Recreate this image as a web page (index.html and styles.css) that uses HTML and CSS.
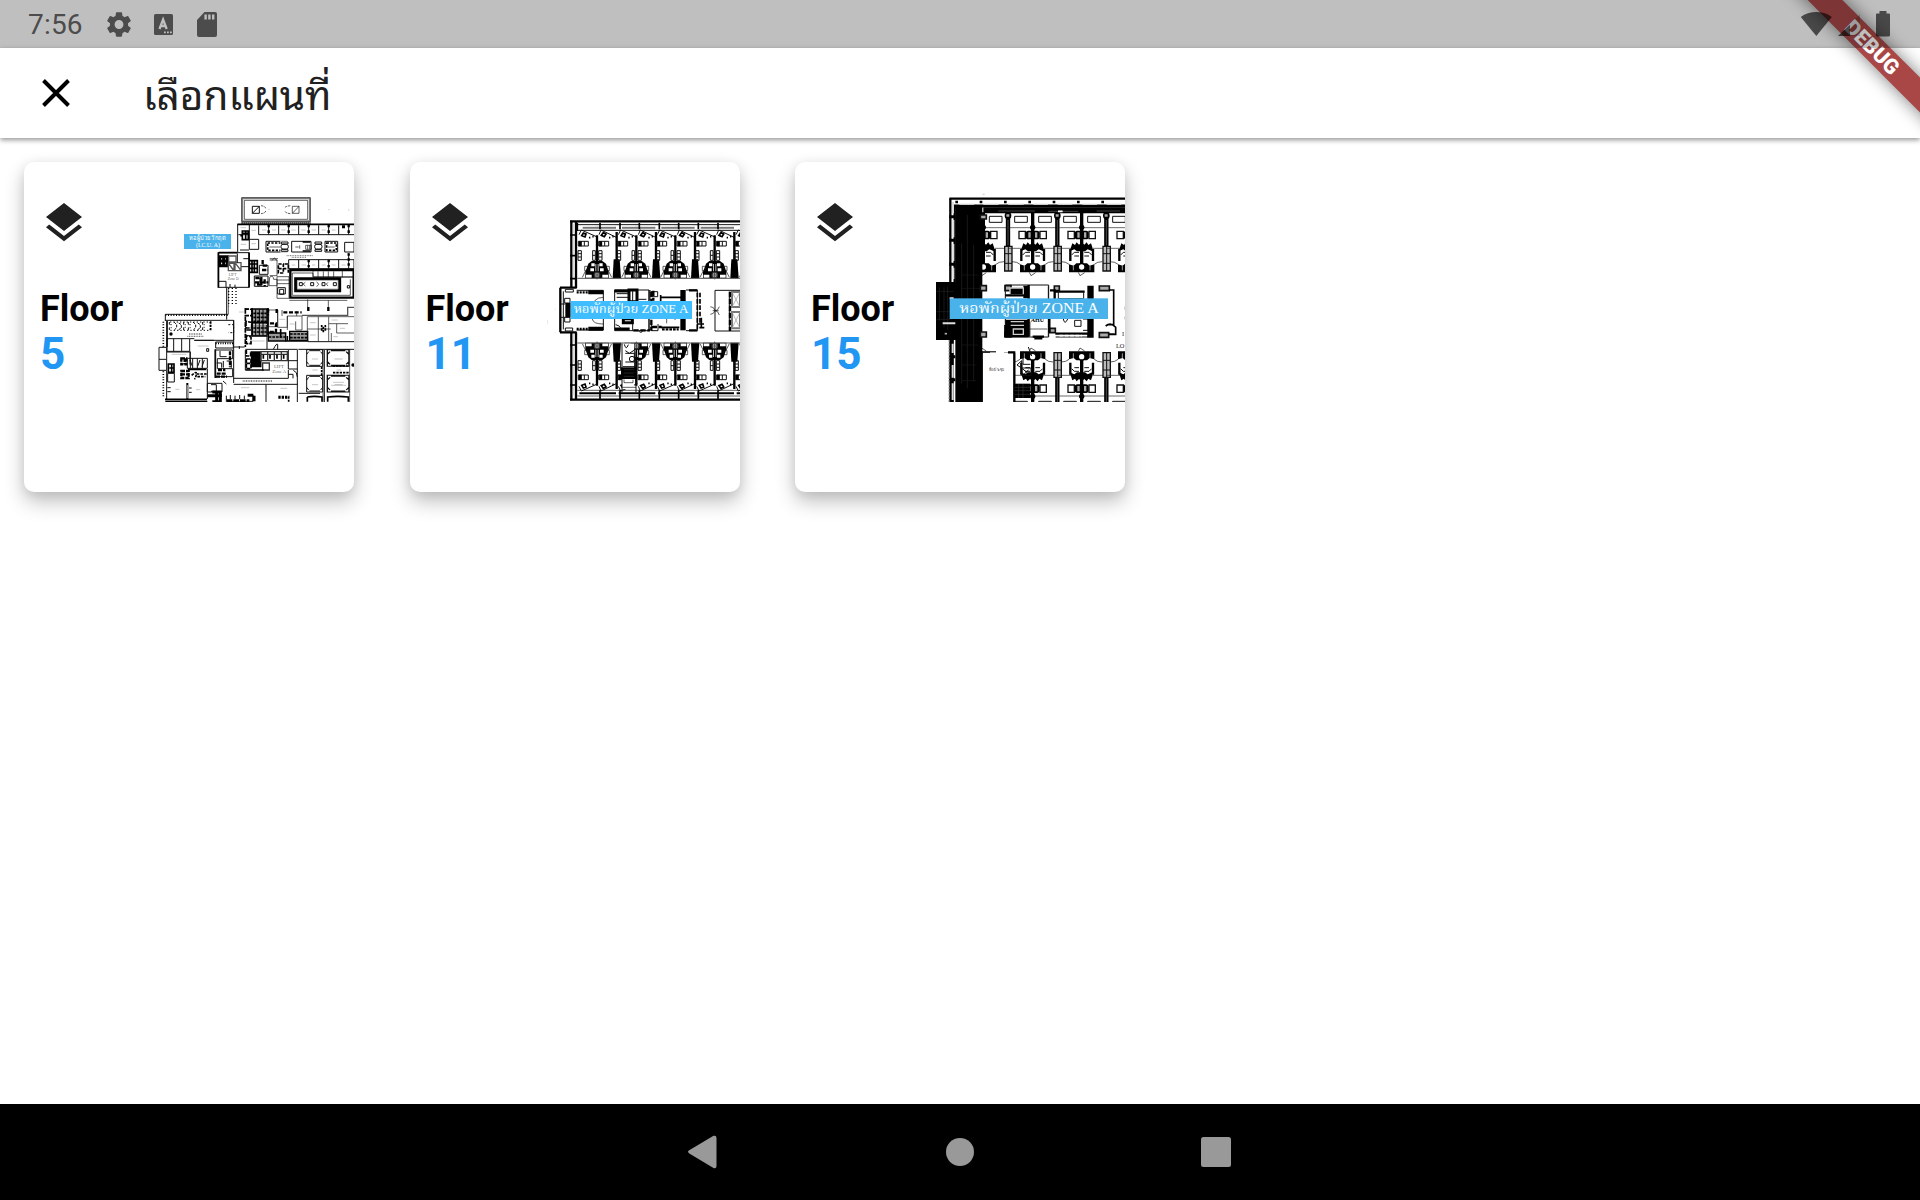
FILE: index.html
```html
<!DOCTYPE html>
<html lang="th">
<head>
<meta charset="utf-8">
<title>เลือกแผนที่</title>
<link rel="stylesheet" href="styles.css">
</head>
<body>
<div class="screen">
  <header class="statusbar">
    <span class="clock">7:56</span>
    <svg class="st gear" viewBox="2.500 2.200 19 19.600"><path d="M19.14 12.94c.04-.3.06-.61.06-.94s-.02-.64-.07-.94l2.03-1.58a.49.49 0 0 0 .12-.61l-1.92-3.32a.49.49 0 0 0-.59-.22l-2.39.96a7 7 0 0 0-1.62-.94l-.36-2.54a.48.48 0 0 0-.48-.41h-3.84a.48.48 0 0 0-.47.41l-.36 2.54c-.59.24-1.13.57-1.62.94l-2.39-.96a.48.48 0 0 0-.59.22L2.74 8.87a.48.48 0 0 0 .12.61l2.03 1.58c-.05.3-.09.63-.09.94s.02.64.07.94l-2.03 1.58a.49.49 0 0 0-.12.61l1.92 3.32c.12.22.37.29.59.22l2.39-.96c.5.38 1.03.7 1.62.94l.36 2.54c.05.24.24.41.48.41h3.84c.24 0 .44-.17.47-.41l.36-2.54a6.8 6.8 0 0 0 1.62-.94l2.39.96c.22.08.47 0 .59-.22l1.92-3.32a.48.48 0 0 0-.12-.61zM12 15.500a3.500 3.500 0 1 1 0-7 3.500 3.500 0 0 1 0 7z"/></svg>
    <svg class="st ime" viewBox="0 0 19 21"><rect width="19" height="21" rx="1.5"/><path d="M5.5 15 9.1 5.5 12.7 15M6.8 12h5" fill="none" stroke="#bfbfbf" stroke-width="2.300"/><path d="M10 18.300h1.800M13 18.300h1.800M16 18.300h1.800" stroke="#bfbfbf" stroke-width="1.8"/></svg>
    <svg class="st sd" viewBox="0 0 20 25"><path d="M7.5 0H18a2 2 0 0 1 2 2v21a2 2 0 0 1-2 2H2a2 2 0 0 1-2-2V8z"/><path d="M8.6 2.6v5M12.4 2.6v5M16.2 2.6v5" stroke="#bfbfbf" stroke-width="2.4"/></svg>
    <svg class="signals" viewBox="0 0 92 26"><path d="M.8 6C9-.7 23.500-.7 31.800 6L16.300 25z"/><path d="M38 25 50 13.500V25z"/><path d="M50 13.500 60 3v22H50z" opacity=".3"/><path d="M79.500 0h7v2.500H89q1 0 1 1V24q0 1.500-1.500 1.500h-11Q76 25.500 76 24V3.500q0-1 1-1h2.500z"/></svg>
  </header>
  <div class="appbar">
    <svg class="close" viewBox="0 0 28 28"><path d="M1.500 1.500 26.500 26.500M26.500 1.500 1.500 26.500"/></svg>
    <h1>เลือกแผนที่</h1>
  </div>
  <svg class="banner" viewBox="0 0 160 138"><g transform="translate(112.300 47.300) rotate(45)"><rect class="banner-shadow" x="-130" y="-12.300" width="260" height="24.600"/><rect class="banner-strip" x="-130" y="-12.300" width="260" height="24.600"/><text y="7.200" text-anchor="middle" textLength="67">DEBUG</text></g></svg>

  <main class="floors">
    <section class="card">
      <div class="info">
        <svg class="layers" viewBox="0 0 24 24"><path d="m11.990 18.540-7.370-5.730L3 14.070l9 7 9-7-1.630-1.270zM12 16l7.360-5.730L21 9l-9-7-9 7 1.630 1.270z"/></svg>
        <span class="name">Floor</span><span class="num">5</span>
      </div>
      <svg class="plan" viewBox="420 105 612 651">
        <defs>
          <g id="booth"><path d="M0 0h48v50H0zM6 6 0 14M42 6l6 8M6 44l-6-8M42 44l6-8M8 3h32M8 47h32" class="w3"/><path d="M16 28h18" class="faint"/></g>
          <g id="fixture"><path d="M2 2h20v6H2zM2 25h20v5H2z" class="w3"/><rect x="1" y="9" width="22" height="14" rx="6" class="w3"/></g>
          <g id="seats" class="w3"><path d="M0 0v8h7M0 24v-7h7M14 0l8 8v9l-8 8M28 3l8 5v10l-8 5M43 0v8h6M43 24v-8h6" stroke-dasharray="8 3"/></g>
        </defs>
        <!-- roof room -->
        <path d="M697 145h202v68H697z" stroke="#888" stroke-width="5" fill="#fff"/><path d="M695 143h206v72H695zM703 151h190v57H703z" class="w2"/><path d="M694 219h208" stroke="#555" stroke-width="8" stroke-dasharray="5 1"/>
        <path d="M727 169h21v21h-21zM748 169l-21 21" class="w3"/><path d="M847 169h20v21h-20zM867 169l-20 21" class="w2"/><path d="M753 167q14 2 14 8M753 191q14-2 14-8M841 167q-17 2-17 8M841 191q-16-2-16-8" class="w2" stroke-dasharray="7 3"/>
        <path d="M775 178h4M955 179h4M1014 180h4" class="faint"/>
        <!-- north wing -->
        <path d="M683 223v84M718 225v73h28v-30h-28M718 254h-33M690 300h27" class="w3"/><path d="M682 223h350" class="w5"/>
        <path d="M746 226v28h286M776 226v28M806 226v28M836 226v28M866 226v28M896 226v28M926 226v28M956 226v28M986 226v28M1016 226v28" class="w3"/>
        <path d="M776 224v28M836 224v26M896 224v26M956 224v30M1016 224v28" class="w7" stroke-dasharray="8 9"/>
        <path d="M756 240h13M786 240h12M814 240h13M844 240h13M874 240h13M905 240h13M935 240h12M965 240h12M692 233h16M692 283h16M724 241h14M724 281h14" class="faint"/>
        <path d="M697 243h18v26h-18zM698 250h18M707 243v26M691 257h8" class="w5"/><path d="M996 230h9" class="w9"/>
        <path d="M768 274h64v32h-64zM845 274h58v32h-58zM945 274h38v32h-38z" class="w3"/><path d="M773 279h54v22h-54zM950 279h29v22h-29z" class="w5" stroke-dasharray="7 4"/><path d="M778 291h45M954 291h20" class="w2"/><path d="M878 276h23M878 303h23" class="w5"/><rect x="811" y="272" width="26" height="36" fill="#fff"/><use href="#fixture" x="812" y="274"/><use href="#fixture" x="913" y="274"/><path d="M887 286h17v12h-17zM893 286v12M899 286v12M856 291h10M869 286v10" class="w2"/><path d="M1004 277h28v29h-28z" class="w3"/>
        <path d="M830 317h78M845 322h45" stroke="#777" stroke-width="3" stroke-dasharray="3 2"/><path d="M836 329h196v27H836zM866 329v27M896 329v27M926 329v27M956 329v27M986 329v27M1016 310v46" class="w3"/><path d="M896 330v27M956 330v27M1016 310v45" class="w7" stroke-dasharray="7 8"/><path d="M845 345h11M875 345h13M906 345h10M935 345h12M965 345h12M995 345h11" class="faint"/>
        <!-- north-west block -->
        <path d="M626 308h92v104h-92z" class="w3"/><path d="M625 307v106M626 308h55" class="w5"/><path d="M629 320h23v27h-23zM641 320v27M629 333h23" class="w9"/><path d="M656 318h22v18h-22zM655 340h17v22h-17zM675 338h18v24h-18zM657 342l13 18M677 341l14 18" stroke="#555" stroke-width="4" fill="none"/><path d="M682 310v28M694 350h24M700 326h18M626 394h22v18M660 412v-10M675 412v-8" class="w3"/>
        <text x="656" y="377" class="tiny">LIFT</text><text x="653" y="390" class="tiny">Zone D</text>
        <path d="M717 308v104M718 332h24v35h-24zM726 332v35M733 332v35M718 342h24M718 355h24" class="w5"/><path d="M733 378h41v31h-41zM748 346h26v27h-26z" class="w3"/><path d="M736 384h16v20h-16M756 360h18M758 330v17h17M754 380v26M764 388v21M735 397h40" class="w7" stroke-dasharray="13 4"/>
        <path d="M779 330h22v47h-22M779 326h25M785 332l8-8 9 8M779 382q10-9 12 6h10v19h-24zM801 380h36v65h-36zM801 390h36M801 401h36" class="w2"/><path d="M805 342h15v27h-15zM824 342h11v26M805 356h30" class="w5" stroke-dasharray="10 4"/><path d="M803 413h23v19h-23zM809 418h12v15h-12z" class="w3"/>
        <!-- auditorium -->
        <path d="M841 360v83h190V360z" fill="#fff" stroke="#000" stroke-width="7"/><path d="M847 369h62v13h122M847 369v67h174v-48M909 363v17h120M924 364v17M940 364v17M955 364v17M971 364v17M997 362v20" class="w2"/><path d="M857 386h132v36H857z" class="w9"/><path d="M862 391h122v26H862z" fill="#fff" stroke="#888" stroke-width="2"/><path d="M868 398h9v9h-9zM902 398h9v9h-9zM936 398h9v9h-9zM970 398h9v9h-9zM1012 407h7v7h-7z" class="w3"/><path d="M886 397l-7 5 7 6M920 395l6 8-6 7M954 397l-5 5 5 6" class="w2"/>
        <!-- corridors -->
        <path d="M650 412v97" class="w3"/><path d="M656 414v55M667 414v53M678 414v48" stroke="#000" stroke-width="4" stroke-dasharray="3 6"/><path d="M655 414v80" class="w2"/><path d="M838 451h174M893 448v34M955 451v31" class="w2"/><path d="M895 471v12M955 471v12" class="w7"/><path d="M876 496h137v-24h19" stroke="#555" stroke-width="4" fill="none"/><path d="M687 486h14M712 478h6" class="faint"/>
        <!-- restaurant wing -->
        <path d="M466 495h187" stroke="#000" stroke-width="6" stroke-dasharray="3 5"/><path d="M466 493v20M466 493h187M466 511h205v60H553" class="w3"/><path d="M460 515v80M460 664v80" stroke="#000" stroke-width="5" stroke-dasharray="3 5"/><path d="M471 513v78" class="w5"/><use href="#seats" x="478" y="516"/><use href="#seats" x="535" y="516"/><path d="M480 516h120v25H480" class="w3" stroke-dasharray="4 6"/><path d="M602 514v29" class="w5" stroke-dasharray="7 3"/><circle cx="483" cy="552" r="5"/><path d="M537 552h38M532 559h48" stroke="#777" stroke-width="4" stroke-dasharray="3 2"/><path d="M655 524h16v24h-16" class="w3" stroke-dasharray="6 5"/>
        <path d="M471 566h68v38h-68zM491 566v38M515 566v38M539 566h14M553 571h59M617 576h53v18h-53zM540 604v40" class="w3"/><path d="M617 580h52" class="w5" stroke-dasharray="3 4"/><path d="M563 588h33M485 613h44" class="faint"/><path d="M590 596h6v8h-6z" class="w3"/>
        <path d="M447 592h23v69h-23zM447 628h22M471 606h70v48" class="w3"/><path d="M475 642h17v25h-17zM478 654h16M485 642v26" class="w5"/><path d="M473 670h20v26h-20zM470 662v86" class="w3"/>
        <path d="M514 625h15v18h-15zM514 663h22v21h-22zM514 673h22M524 625v18" class="w7" stroke-dasharray="11 3"/><path d="M532 625h60v30h-60zM548 625v30M562 625v30M577 625v30M540 630l7 19M570 630l-7 19M583 630l-7 20" class="w3"/><path d="M534 658h55M616 598v86" class="w5"/><path d="M592 657v90" class="w3"/>
        <path d="M545 676q16-15 14-3t-6 14M560 672h30M562 680h24" class="w5" stroke-dasharray="8 3"/>
        <path d="M616 600h52v26h-46v30h46v24h-52zM630 603v17h20M640 633v20M650 633h14v20M620 639h15v14" class="w3"/><path d="M660 604v48M618 680h33M620 671h29M624 660h22" class="w7" stroke-dasharray="12 3"/>
        <path d="M532 699v49" stroke="#000" stroke-width="6"/><path d="M532 705v40" stroke="#fff" stroke-width="2"/><path d="M472 713h10M537 714h8M472 725h10M537 727h8" class="w3"/><path d="M465 748h126M466 755h126" class="w5"/><path d="M592 700h44v26h-44zM603 704h16v20h-16" class="w3"/><path d="M607 726h24v29h-24M592 737h44M620 722v33" class="w9"/><path d="M649 737v17h80v-18M661 748v-13M675 748v-11M689 748v-13M703 748v-11" class="w3"/><path d="M650 752h68M713 736h19v19" class="w9" stroke-dasharray="17 3"/>
        <path d="M496 718h12M558 719h13M693 713h25M811 715h20" class="faint"/>
        <!-- stair cores -->
        <path d="M671 510v189M671 591h33M688 588v9" class="w3"/><path d="M706 477v20h20v-19zM708 514v20h17v-17zM709 556v25h14v-20zM706 500v91M709 540h14" class="w5" stroke-dasharray="14 3"/>
        <path d="M727 477h44v81h-44z" class="treads"/><path d="M730 490h40M730 502h40M730 514h40M730 534h40M730 546h40" class="w5" stroke-dasharray="9 2"/><path d="M728 523h43" stroke="#ccc" stroke-width="3"/><path d="M737 478v80M748 478v80M759 478v80" stroke="#000" stroke-width="3"/><path d="M726 474v85M774 474v80M726 518h47" class="w5"/><path d="M775 549h52v24h-52zM839 544h54v27h-54z" class="treads"/><path d="M776 561h50M840 552h52M840 563h52" class="w5" stroke-dasharray="8 3"/><path d="M774 547h20M812 537v26M826 573h69M832 558v16" class="w5"/>
        <path d="M776 480h27v50h-27zM803 480v52h29v-34h44v42h-19v-26M832 498v42M860 484v14M816 480v18M892 500v74M925 500v74M892 500h140M892 537h70M956 500v74M956 521h58M980 521v28h52M964 549v25" class="w2"/><path d="M780 520h18v26h-18M800 477v15M820 487h55M774 476v20" class="w7" stroke-dasharray="12 5"/><path d="M935 525v20M940 530v18M946 525v20" class="w5" stroke-dasharray="7 3"/><path d="M808 508h18M839 522h15M900 518h17M965 510h18M990 535h15M900 555h17M970 560h14" class="faint"/>
        <path d="M706 557h65v40M790 598q10-20 13-15v15M706 598h157M894 575h138" class="w3"/><path d="M724 573h40" class="faint"/>
        <!-- lifts zone A -->
        <path d="M706 600v60M862 600v157M835 600v57h28M835 632h28M835 660v25M671 685h164M671 703h192M768 703v53M649 702l-10-9M835 673h14v12M850 661q12 4 12 20" class="w3"/><path d="M709 600v18h13v-15M709 626v30h14v-29h-14M709 640h14" class="w5" stroke-dasharray="12 3"/><path d="M727 608h23v39h-23zM736 608v39M744 608v39M727 620h23M727 633h23" class="w9"/><path d="M752 605h80v27h-80zM752 613h80M773 605v27M793 605v27M814 605v27M758 639h20v21h-20z" stroke="#333" stroke-width="4" fill="none"/><path d="M760 614v12M780 614v12M801 614v12M821 614v12M706 660h55" class="w5"/>
        <text x="792" y="655" class="tiny big">LIFT</text><text x="787" y="670" class="tiny big">Zone A</text><path d="M698 693h90" stroke="#666" stroke-width="4" stroke-dasharray="3 2"/><path d="M805 740h31v15M805 744h28" class="w5" stroke-dasharray="7 3"/>
        <path d="M865 598h167M943 600v156M866 730h64" class="w3"/><path d="M939 600v156" class="w2"/><use href="#booth" x="890" y="599"/><use href="#booth" x="890" y="676"/><g transform="translate(952 599) scale(1.350 1)"><use href="#booth"/><use href="#booth" y="77"/></g><path d="M892 741q20-4 44 0v14M892 741v14M953 755v-14q30-4 62 0v14" class="w5"/><path d="M935 650v29M968 648h49M969 668h49" class="w5" stroke-dasharray="7 3"/><path d="M907 660h16M980 660h14M969 697h33M963 706h45" class="faint"/><path d="M1019 598v158" class="w2"/><circle cx="1029" cy="645" r="5"/>
        <rect x="522" y="252" width="141" height="45" fill="#49b2ea"/><text x="592" y="271" class="mini" textLength="108" lengthAdjust="spacingAndGlyphs">หอผู้ป่วยวิกฤต</text><text x="594" y="291" class="mini" textLength="72" lengthAdjust="spacingAndGlyphs">(I.C.U. A)</text>
      </svg>
    </section>

    <section class="card">
      <div class="info">
        <svg class="layers" viewBox="0 0 24 24"><path d="m11.990 18.540-7.370-5.730L3 14.070l9 7 9-7-1.630-1.270zM12 16l7.360-5.730L21 9l-9-7-9 7 1.630 1.270z"/></svg>
        <span class="name">Floor</span><span class="num">11</span>
      </div>
      <svg class="plan" viewBox="-12 -45 612 651">
        <defs>
          <!-- pair of patient rooms round a shared bathroom core -->
          <g id="ward">
            <path d="M-54 104l7-14 50 22M6 104l6-14 46 22" class="w3"/>
            <path d="M0 106v80M59 96v90" class="w7"/><path d="M-56 124h30v14h-30zM-38 124v14M5 124h30v14H5zM23 124v14" class="w3"/><path d="M-50 124v15M11 124v15" class="w9"/><path d="M-46 107l5-8 8 3-3 9zM13 106l6-8 8 4-5 8z" class="w5"/><path d="M-24 113h4M-14 110h4M36 113h4M46 110h4" class="w5"/>
            <path d="M-57 152h10v29h-10zM-57 161h10M-57 171h10M5 152h10v29H5zM5 161h10M5 171h10M-13 152h8v29h-8zM-13 166h8" class="w3"/>
            <path d="M50 178h18l4 57H47z"/><path d="M-26 191l10-8H16l11 8 8 24v20h-70v-20z"/><path d="M-17 190h10v9h-10zM7 190h10v9H7zM-20 205h11v9h-11zM9 205h11v9H9zM-33 224h17v9h-17zM16 224h17v9H16z" fill="#fff"/><path d="M-5 192h3v22h-3zM2 192h3v22H2z" fill="#bbb"/><circle cy="225" r="8" fill="#ddd" stroke="#333" stroke-width="4"/><path d="M-7 225H7M0 218v20" stroke="#444" stroke-width="3"/><path d="M-37 199h10v13h-10zM27 199h10v13H27zM-44 232l10-20M44 232l-10-20" class="w2"/>
          </g>
          <g id="ward-row"><use href="#ward" x="171"/><use href="#ward" x="289"/><use href="#ward" x="406"/><use href="#ward" x="524"/><use href="#ward" x="642"/></g>
        </defs>
        <use href="#ward-row"/>
        <use href="#ward-row" transform="translate(0 663) scale(1 -1)"/>
        <rect x="246" y="430" width="36" height="137" fill="#fff"/>
        <path d="M246 430v147M288 455v122M253 433q5 20 12 1M256 452l12 8 14-9M256 460h27v26h-27M248 500h40" class="w3"/><circle cx="276" cy="477" r="8" class="w3"/><path d="M243 502h46v35h-46z"/><path d="M252 509h31M252 519h31M252 529h31" stroke="#333" stroke-width="2"/><path d="M252 538v10h27v-9M246 562h42" class="w2"/>
        <path d="M90 64h510" class="w7"/><path d="M112 74h488M112 91h488" class="w3"/><path d="M128 83h472" stroke="#777" stroke-width="6" stroke-dasharray="100 18"/><path d="M123 78h477" stroke="#fff" stroke-width="2" stroke-dasharray="43 16"/><path d="M112 68v25M180 68v20M240 68v20M298 68v20M358 68v20M416 68v20M475 68v20M534 68v20" class="w5"/>
        <path d="M90 599h510" class="w7"/><path d="M112 571h488M112 588h488" class="w2"/><path d="M118 580h482" stroke="#000" stroke-width="6" stroke-dasharray="110 8"/><path d="M180 571v26M240 571v26M298 571v26M358 571v26M416 571v26M475 571v26M534 571v26" class="w5"/>
        <path d="M94 62v202M94 396v205M108 64v200M108 397v202" class="w7"/><path d="M101 72v28M101 110v52M101 172v60M101 402v28M101 440v50M101 500v50M101 561v25" stroke="#ddd" stroke-width="5"/><path d="M90 105h20M90 167h20M90 236h20M90 435h20M90 495h20M90 555h20" class="w5"/>
        <path d="M112 235h488M112 429h488" stroke="#555" stroke-width="3"/>
        <path d="M60 263h50M60 397h50M61 263v134" class="w7"/><path d="M70 274v114M76 268h24v8H76zM76 384h22v9H76zM74 295h16v14H74zM74 352h16v14H74zM63 312h12M63 352h12" class="w3"/><path d="M76 309h16v43H76z"/><path d="M110 271h80v119h-80" class="w3"/><path d="M145 277h45M145 386h45" stroke="#000" stroke-width="12"/><path d="M110 277h38M110 387h36" class="w7" stroke-dasharray="6 3"/><path d="M190 292q-31 0-33 33M190 372q-31 0-33-15" class="w2"/>
        <!-- service core -->
        <path d="M224 270h103v122H224zM278 270v122M327 270v122" class="w3"/><path d="M223 273h44M267 270h24v35h-24zM224 387h45M250 356h27v12h-27z" class="w9"/><path d="M230 281h36v11h-36M227 374q10 0 18 14M330 270v30M333 275h20v15h-20zM334 367v25h20v-20" class="w3"/><path d="M280 391h50M334 275v117M340 272v30M335 381h30" class="w7" stroke-dasharray="16 5"/><path d="M362 292h68M362 285v20M363 382h55" class="w5"/><path d="M366 388h50" class="w7" stroke-dasharray="8 3"/><path d="M380 310v60M405 310v50" class="w2"/><path d="M438 270h34v122h-34" class="w3"/><path d="M421 270h16v121h-16z"/><path d="M447 271h25M447 391h25" class="w7"/><path d="M472 278v110M480 278v90" class="w5" stroke-dasharray="14 5"/><path d="M484 353v28M472 372h20M478 383h15" class="w5"/><path d="M295 391q7 12 15 0M295 298h24" class="w3"/>
        <!-- lifts -->
        <path d="M600 271h-75v122h75M568 275v117" class="w3"/><path d="M570 275v118" stroke="#000" stroke-width="7" stroke-dasharray="17 4"/><path d="M576 276h24v45h-24zM576 336h24v49h-24z" stroke="#777" stroke-width="6" fill="none"/><path d="M576 276l24 45M600 276l-24 45M576 336l24 49M600 336l-24 49" stroke="#999" stroke-width="2"/><path d="M511 320q11 0 14 12 9 1 13-12M511 343q10 0 14-11 9 0 13 13M518 332h18" class="w2"/>
        <path d="M23 360v12M46 326v4M46 397v4" class="faint" opacity=".4"/>
        <rect x="92" y="303" width="364" height="54" fill="#40bdff"/><text x="273" y="339" class="zone" textLength="344" lengthAdjust="spacingAndGlyphs">หอพักผู้ป่วย ZONE A</text>
      </svg>
    </section>

    <section class="card">
      <div class="info">
        <svg class="layers" viewBox="0 0 24 24"><path d="m11.990 18.540-7.370-5.730L3 14.070l9 7 9-7-1.630-1.270zM12 16l7.360-5.730L21 9l-9-7-9 7 1.630 1.270z"/></svg>
        <span class="name">Floor</span><span class="num">15</span>
      </div>
      <svg class="plan" viewBox="3 0 612 651">
        <defs>
          <!-- suite pair, centred on the wall between two beds -->
          <g id="suite">
            <path d="M-74 128H74M-74 190H74" stroke="#222" stroke-width="2"/><path d="M0 82v112" stroke="#000" stroke-width="10"/><path d="M-54 94h38v18h-38zM18 94h38v18H18z" class="w3"/><circle cy="127" r="8"/>
            <path d="M-41 139h19v22h-19zM22 139h19v22H22z" stroke="#111" stroke-width="4" fill="#fff"/><rect x="-21" y="137" width="42" height="26" rx="8"/><path d="M-13 142h7v16h-7zM7 142h7v16H7z" fill="#aaa"/>
            <path d="M-32 187l4-12 8 5 5-8 7 7 8-7 8 7 7-7 5 8 8-5 4 12v12l-14-6-8 6h-24l-8-6-14 6z"/><path d="M-5 190H5v46H-5z"/><path d="M-34 192v36M34 192v36" class="w7"/><path d="M-30 210l8-8h14M30 210l-8-8H8M-22 213h14M8 213h14" class="w3"/>
            <path d="M-38 262v-24l14 4 8-7h32l8 7 14-4v24z"/><path d="M-25 242v14M25 242v14" stroke="#999" stroke-width="3"/><circle cy="246" r="10" fill="#fff" stroke="#000" stroke-width="4"/><path d="M-10 262l5 10 14-9M-38 238q-8-8-24-8M38 238q8-8 24-8" class="w2"/>
            <path d="M74 92v100" stroke="#000" stroke-width="13"/><path d="M74 105v76" stroke="#777" stroke-width="2"/><path d="M64 184h22v74H64z" fill="#bbb" stroke="#111" stroke-width="4"/><path d="M75 184v74M64 206h22M64 235h22" class="w3"/><circle cx="74" cy="92" r="10"/><path d="M69 88h9v7h-9z" fill="#aaa"/>
          </g>
          <g id="suite-row"><use href="#suite" x="190"/><use href="#suite" x="338"/><use href="#suite" x="485"/><use href="#suite" x="632"/></g>
        </defs>
        <use href="#suite-row"/>
        <use href="#suite-row" transform="translate(0 761) scale(1 -1)"/>
        <rect x="188" y="502" width="96" height="149" fill="#fff"/>
        <path d="M88 41h527" class="w7"/><path d="M106 51h509" stroke="#000" stroke-width="8" stroke-dasharray="8 65"/><path d="M102 63h513" class="w9"/><path d="M118 58h44M190 58h46M265 58h46M340 58h44M413 58h44M487 58h44M560 58h44" stroke="#ccc" stroke-width="4"/><path d="M190 76h425" stroke="#000" stroke-width="18"/><path d="M235 78h110M385 79h90M530 78h70" stroke="#444" stroke-width="3"/><path d="M414 79h14" stroke="#fff" stroke-width="5"/><path d="M188 28h6" class="faint"/>
        <path d="M106 64h81v587h-81z"/><path d="M125 175v420M142 90v520M161 180v410" stroke="#181818" stroke-width="3"/><path d="M125 270h50M123 310h57M124 480h50M125 540h45M124 587h45" stroke="#181818" stroke-width="2"/>
        <path d="M91 41v252M104 60v233M98 464v187M91 464v187" class="w7"/><path d="M88 95h18M88 166h18M88 238h18M88 515h18M88 584h18" class="w9"/><path d="M99 51v34M100 105v52M100 177v51M100 248v34M98 476v28M98 540v38M98 595v50" stroke="#ddd" stroke-width="6"/><path d="M87 465v186" stroke="#999" stroke-width="3" stroke-dasharray="7 3"/>
        <path d="M48 291h60v174H48z"/><path d="M58 307v100M72 307v120M83 305v130M50 319h50M50 380h45M50 403h40" stroke="#222" stroke-width="2"/><path d="M68 415h38M89 340h12" stroke="#ddd" stroke-width="6"/><path d="M74 446h7" stroke="#aaa" stroke-width="5"/>
        <path d="M181 302h18v15h-18zM181 441h18v15h-18zM181 90h18v12h-18zM255 302h18v15h-18zM255 441h18v15h-18zM403 303h15v14h-15zM389 430h17v13h-17zM538 303h30v14h-30zM538 443h28v14h-28z" fill="#aaa" stroke="#111" stroke-width="5"/>
        <!-- service core -->
        <path d="M256 300h130v156H256zM325 300v156M385 304v150" class="w3"/><path d="M310 302h16v38h-16zM256 404h68v53h-68z"/><path d="M270 309h40v20h-40zM272 410h40M272 421h40M280 432h30v16h-30z" stroke="#ccc" stroke-width="4"/><path d="M256 331h69M256 420v36M338 455h34M343 460h24M326 300v155" class="w7"/><path d="M330 432h52M330 410v43" class="w2"/><text x="332" y="410" class="room">AHU</text><path d="M390 316h14v28M404 320h90M406 446h98M388 402v40" class="w7"/><path d="M415 319v22h76v-20M430 402q4 20 13 0M464 406h19v18h-19zM489 402h16v34h-16M407 456h97v-12" class="w3"/><path d="M502 302h19v42h-19zM502 402h19v56h-19z"/><path d="M418 452h68" stroke="#fff" stroke-width="5" stroke-dasharray="12 4"/><path d="M567 315h14v104h-14M567 447h16M557 423q16-13 30 4v21h-20" class="w5"/><path d="M574 321v92" stroke="#fff" stroke-width="5" stroke-dasharray="12 4"/><path d="M614 365v9M614 395v8" class="faint"/>
        <text x="606" y="453" class="lobby">I</text><text x="588" y="489" class="lobby">LO</text>
        <path d="M187 502v149M187 502h23M265 502h18v149M309 500v38h22M325 486l10 27M291 540l14-13v22z" class="w3"/><path d="M264 502h22M283 503v148" class="w7"/><text x="207" y="559" class="meeting" textLength="47" lengthAdjust="spacingAndGlyphs">ห้องประชุม</text><path d="M283 596h48v43h-48z"/><path d="M284 607h46M284 617h46M284 628h46M296 597v42M309 597v42" stroke="#333" stroke-width="2"/><path d="M306 549h27v23h-27zM312 554l14 14M326 554l-14 14" class="w3"/>
        <rect x="89" y="340" width="475" height="62" fill="#49b2ea"/><text x="327" y="383" class="zone large" textLength="418" lengthAdjust="spacingAndGlyphs">หอพักผู้ป่วย ZONE A</text>
      </svg>
    </section>
  </main>

  <nav class="navbar">
    <svg viewBox="0 0 32 34"><path d="M.8 15.500 25.500.800Q28.500 0 28.500 3v28q0 3-3 2L1.300 18.500q-2.300-1.500-.500-3z"/></svg>
    <svg viewBox="0 0 32 34"><circle cx="16" cy="17" r="14"/></svg>
    <svg viewBox="0 0 32 34"><rect x="1" y="2" width="30" height="30" rx="2.500"/></svg>
  </nav>
</div>
</body>
</html>
```

FILE: styles.css
```css
* { box-sizing: border-box; }
body { margin: 0; background: #fff; font-family: Roboto, "Noto Sans Thai", "Noto Sans", sans-serif; }
.screen { position: relative; width: 1920px; height: 1200px; overflow: hidden; display: flex; flex-direction: column; }

.statusbar { position: relative; z-index: 3; height: 48px; flex: none; display: flex; align-items: center; padding: 0 28px; background: rgba(0, 0, 0, .25); color: #4c4c4c; fill: #4c4c4c; }
.clock { font-size: 28px; line-height: 48px; width: 79px; padding-top: 2px; letter-spacing: .2px; }
.st { flex: none; }
.gear { width: 24px; height: 25px; margin-right: 23px; }
.ime { width: 19px; height: 21px; margin-right: 24px; }
.sd { width: 20px; height: 25px; }
.signals { width: 92px; height: 26px; margin-left: auto; fill: rgba(0, 0, 0, .62); }

.appbar { position: relative; z-index: 1; flex: none; height: 90px; display: flex; align-items: center; padding-left: 42px; background: #fff; box-shadow: 0 2px 5px rgba(0, 0, 0, .42); }
.close { width: 28px; height: 28px; stroke: #000; stroke-width: 3.900; }
h1 { margin: 6px 0 0 73px; font-family: Roboto, "Noto Sans Thai Looped", "Noto Looped Thai", "Noto Sans Thai", sans-serif; font-size: 40.500px; font-weight: 400; line-height: 84px; color: #212121; }

.banner { position: absolute; z-index: 2; top: 0; right: 0; width: 160px; height: 138px; }
.banner-shadow { fill: #000; opacity: .5; filter: blur(9px); }
.banner-strip { fill: #a94747; }
.banner text { font: 900 21px Roboto, sans-serif; fill: #fff; }

.floors { flex: 1; display: flex; gap: 55.500px; padding: 24px; align-items: flex-start; }
.card { width: 330px; height: 330px; flex: none; display: flex; padding-left: 16px; border-radius: 10px; background: #fff; box-shadow: 0 10px 20px rgba(0, 0, 0, .24), 0 2px 12px rgba(0, 0, 0, .08); overflow: hidden; }
.info { width: 110px; flex: none; padding-top: 37px; display: flex; flex-direction: column; }
.layers { width: 48px; height: 48px; fill: #212121; }
.name { margin-top: 41px; font-size: 36px; line-height: 42px; font-weight: 700; color: #000; }
.num { font-size: 44px; line-height: 48px; font-weight: 700; color: #2196f3; }

.plan { width: 204px; height: 217px; margin-top: 23px; flex: none; }
.w2, .w3, .w5, .w7, .w9 { fill: none; stroke: #111; }
.w2 { stroke-width: 2; }
.w3 { stroke-width: 3; }
.w5 { stroke-width: 5; stroke: #000; }
.w7 { stroke-width: 7; stroke: #000; }
.w9 { stroke-width: 9; stroke: #000; }
.faint { fill: none; stroke: #aaa; stroke-width: 2; }
.treads { fill: #999; stroke: #000; stroke-width: 4; }
.tiny { font: 11px "Liberation Serif", serif; fill: #666; }
.big { font-size: 14px; }
.mini { font: 19px "Liberation Serif", serif; fill: #fff; text-anchor: middle; }
.zone { font: 37px "Liberation Serif", "Noto Serif Thai", serif; fill: #fff; text-anchor: middle; }
.large { font-size: 44px; }
.room { font: 700 18px "Liberation Serif", serif; }
.lobby { font: 19px "Liberation Serif", serif; fill: #222; }
.meeting { font: 12px "Liberation Serif", serif; fill: #333; }

.navbar { flex: none; height: 96px; background: #000; display: flex; justify-content: center; align-items: center; gap: 224px; fill: #999; }
.navbar svg { width: 32px; height: 34px; }
```
